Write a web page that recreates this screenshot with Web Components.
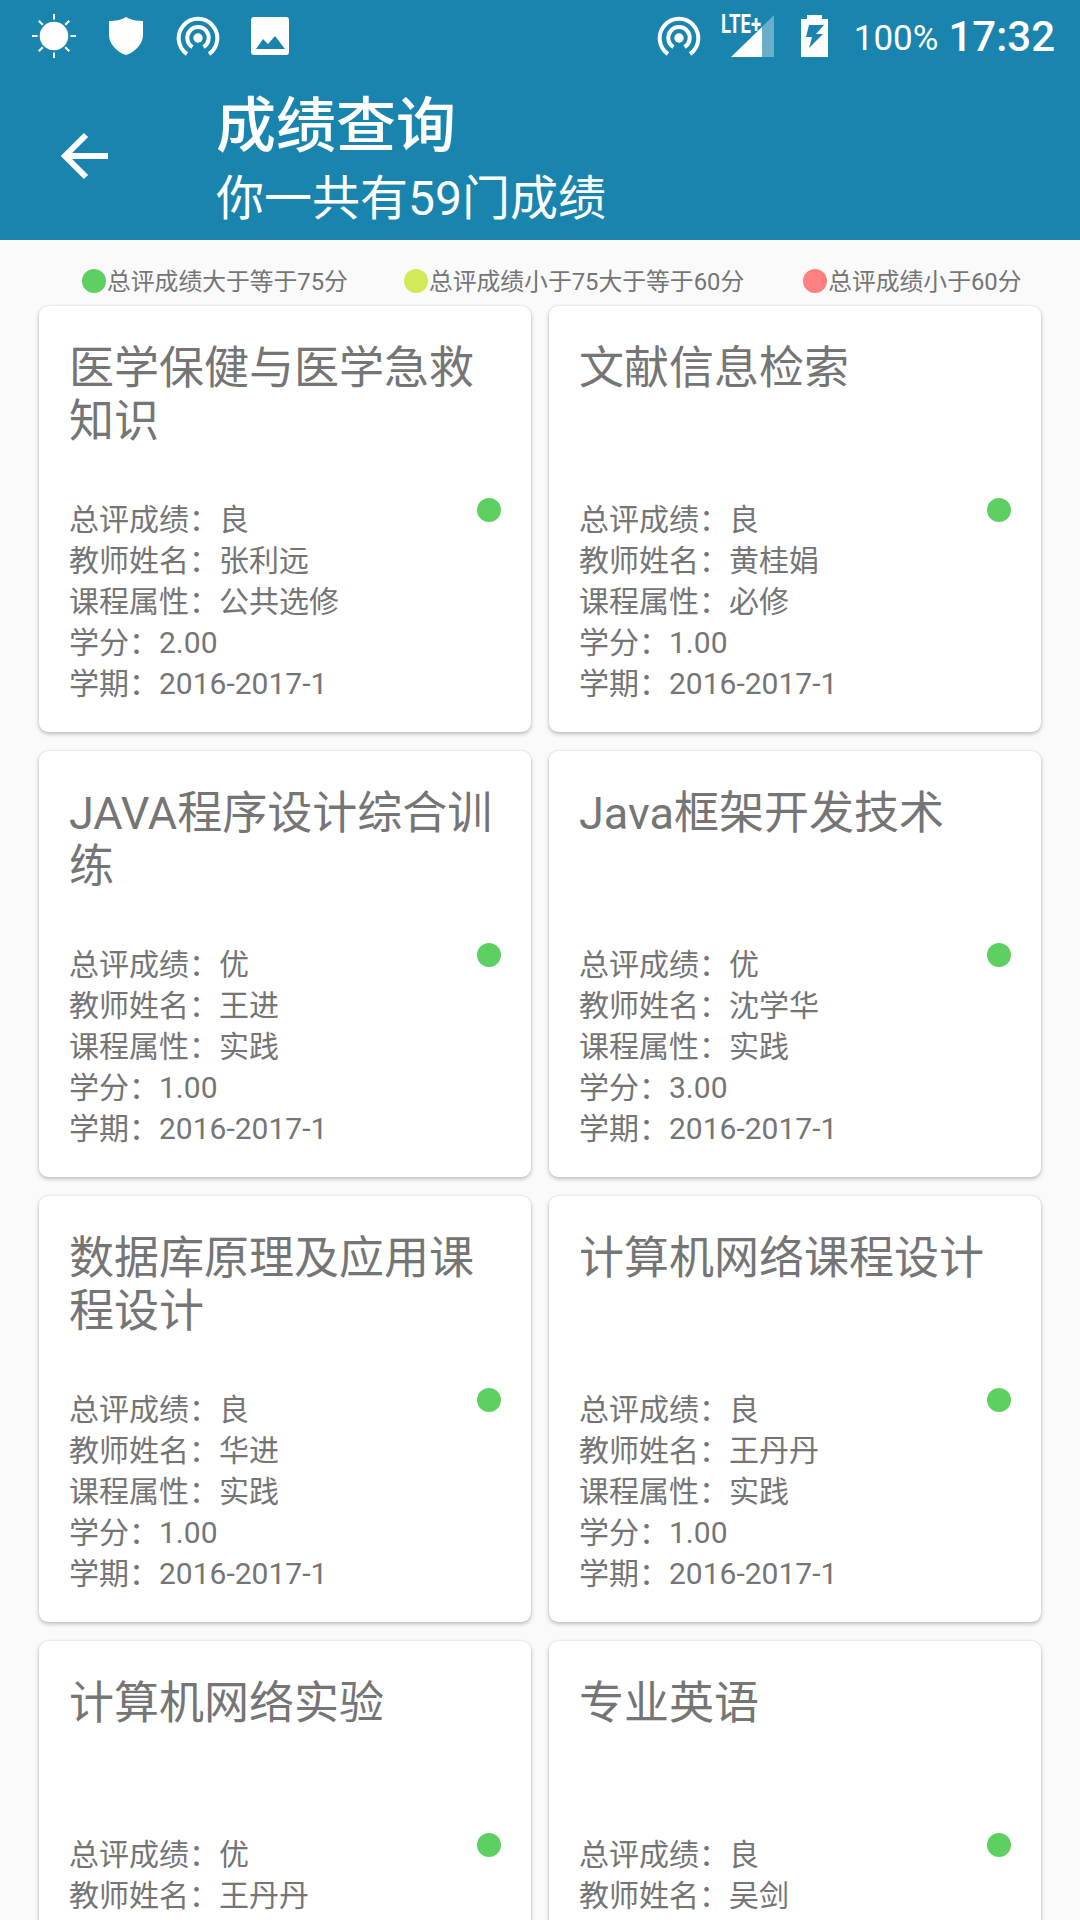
<!DOCTYPE html>
<html lang="zh">
<head>
<meta charset="utf-8">
<title>成绩查询</title>
<style>
    html, body {
        margin: 0;
        width: 1080px;
        height: 1920px;
        overflow: hidden;
        background: #fafafa;
        font-family: Roboto, "Noto Sans CJK SC", sans-serif;
    }
</style>
</head>
<body>
<app-screen>
    <status-bar slot="status"></status-bar>
    <app-bar slot="bar" heading="成绩查询" sub="你一共有59门成绩"></app-bar>
    <grade-legend slot="legend"></grade-legend>
    <grade-grid>
        <grade-card course="医学保健与医学急救知识" score="良" teacher="张利远" kind="公共选修" credit="2.00" term="2016-2017-1"></grade-card>
        <grade-card course="文献信息检索" score="良" teacher="黄桂娟" kind="必修" credit="1.00" term="2016-2017-1"></grade-card>
        <grade-card course="JAVA程序设计综合训练" score="优" teacher="王进" kind="实践" credit="1.00" term="2016-2017-1"></grade-card>
        <grade-card course="Java框架开发技术" score="优" teacher="沈学华" kind="实践" credit="3.00" term="2016-2017-1"></grade-card>
        <grade-card course="数据库原理及应用课程设计" score="良" teacher="华进" kind="实践" credit="1.00" term="2016-2017-1"></grade-card>
        <grade-card course="计算机网络课程设计" score="良" teacher="王丹丹" kind="实践" credit="1.00" term="2016-2017-1"></grade-card>
        <grade-card course="计算机网络实验" score="优" teacher="王丹丹"></grade-card>
        <grade-card course="专业英语" score="良" teacher="吴剑"></grade-card>
    </grade-grid>
</app-screen>

<script>
// Hotspot icon is used twice in the status bar
const hotspotIcon = `
<svg width="44" height="44" viewBox="0 0 44 44" fill="none" stroke="#fff" stroke-width="4">
    <circle cx="22" cy="24" r="4.700" fill="#fff" stroke="none"/>
    <path d="M16.500 33A10.700 10.700 0 1 1 27.500 33"/>
    <path d="M11 40A19.300 19.300 0 1 1 33 40"/>
</svg>`;

class AppScreen extends HTMLElement {
    constructor(){
        super();
        this.attachShadow({mode: 'open'});
        this.shadowRoot.innerHTML = `
<style>
    :host {
        display: block;
        width: 1080px;
        height: 1920px;
        overflow: hidden;
    }
    header {
        background: #1985ae;
        height: 240px;
    }
</style>
<header>
    <slot name="status"></slot>
    <slot name="bar"></slot>
</header>
<slot name="legend"></slot>
<slot></slot>`;
    }
}

class StatusBar extends HTMLElement {
    constructor(){
        super();
        this.attachShadow({mode: 'open'});
        this.shadowRoot.innerHTML = `
<style>
    :host {
        display: flex;
        align-items: center;
        height: 72px;
        padding: 0 25px 0 32px;
        color: #fff;
        box-sizing: border-box;
    }
    svg { display: block; flex: none; }
    .left, .right { display: flex; align-items: center; }
    .left { gap: 33px; }
    .right { margin-left: auto; }
    .pct { font-size: 35px; margin-left: 26px; padding-top: 4px; }
    .time { font-size: 42px; font-weight: 500; margin-left: 10px; }
</style>
<div class="left">
    <svg width="44" height="44" viewBox="0 0 44 44" fill="#fff">
        <circle cx="22" cy="22" r="14.300"/>
        <path d="M21 0h2v5.500h-2zM21 38.500h2V44h-2zM0 21h5.500v2H0zM38.500 21H44v2h-5.500zM6 7.500 7.500 6l4 4L10 11.500zM32.500 10l4-4L38 7.500l-4 4zM10 32.500l1.500 1.500-4 4L6 36.500zM34 32.500l4 4-1.500 1.500-4-4z"/>
    </svg>
    <svg width="34" height="38" viewBox="0 0 34 38" fill="#fff" style="margin-top:-1px">
        <path d="M17 0c5 3 11 4 17 4v14c0 9-8 17-17 20C8 35 0 27 0 18V4c6 0 12-1 17-4z"/>
    </svg>
    ${hotspotIcon}
    <svg width="38" height="38" viewBox="0 0 38 38" style="margin-left:-2px">
        <rect width="38" height="38" rx="3" fill="#fff"/>
        <path d="M5 32l7-10 5 5 7-8 10 13z" fill="#1985ae"/>
    </svg>
</div>
<div class="right">
    ${hotspotIcon}
    <svg width="54" height="60" viewBox="0 -8 54 60" style="margin-left:20px">
        <text x="0" y="19" font-family="Roboto" font-weight="700" font-size="25" fill="#fff" textLength="40" lengthAdjust="spacingAndGlyphs">LTE+</text>
        <path d="M10 43 41 13v30z" fill="#fff"/>
        <path d="M41 13 53 1v42H41z" fill="#fff" opacity=".35"/>
    </svg>
    <svg width="27" height="42" viewBox="0 0 27 42" style="margin-left:26px">
        <path d="M6 0h15v4h6v38H0V4h6z" fill="#fff"/>
        <path d="M8 10h15l-8 9h7L8 33l3-11H5z" fill="#1985ae"/>
    </svg>
    <span class="pct">100%</span>
    <span class="time">17:32</span>
</div>`;
    }
}

class AppBar extends HTMLElement {
    constructor(){
        super();
        this.attachShadow({mode: 'open'});
        this.shadowRoot.innerHTML = `
<style>
    :host {
        display: flex;
        align-items: flex-start;
        height: 168px;
        color: #fff;
    }
    svg { flex: none; margin: 60px 108px 0 60px; display: block; }
    h1 { margin: 19px 0 0; font-size: 60px; line-height: 72px; font-weight: 500; }
    p { margin: 8px 0 0; font-size: 48px; line-height: 56px; }
</style>
<svg width="48" height="48" viewBox="0 0 48 48" fill="none" stroke="#fff" stroke-width="6">
    <path d="M48 24H5M26 3 5 24l21 21"/>
</svg>
<div>
    <h1></h1>
    <p></p>
</div>`;
        this.shadowRoot.querySelector('h1').textContent = this.getAttribute('heading');
        this.shadowRoot.querySelector('p').textContent = this.getAttribute('sub');
    }
}

class GradeLegend extends HTMLElement {
    constructor(){
        super();
        this.attachShadow({mode: 'open'});
        this.shadowRoot.innerHTML = `
<style>
    :host {
        display: flex;
        gap: 56px;
        height: 66px;
        padding: 28px 0 0 82px;
        box-sizing: border-box;
        font-size: 23.800px;
        line-height: 28px;
        color: #757575;
    }
    div { display: flex; align-items: center; gap: 1px; height: 28px; white-space: nowrap; }
    div:last-child { margin-left: 3px; }
    i { width: 24px; height: 24px; border-radius: 50%; margin-bottom: 2px; }
</style>
<div><i style="background:#5ecf61"></i>总评成绩大于等于75分</div>
<div><i style="background:#d3ea58"></i>总评成绩小于75大于等于60分</div>
<div><i style="background:#ff8080"></i>总评成绩小于60分</div>`;
    }
}

class GradeGrid extends HTMLElement {
    constructor(){
        super();
        this.attachShadow({mode: 'open'});
        this.shadowRoot.innerHTML = `
<style>
    :host {
        display: grid;
        grid-template-columns: 492px 492px;
        column-gap: 18px;
        row-gap: 19px;
        padding-left: 39px;
    }
</style>
<slot></slot>`;
    }
}

class GradeCard extends HTMLElement {
    constructor(){
        super();
        this.attachShadow({mode: 'open'});
        this.shadowRoot.innerHTML = `
<style>
    :host {
        display: block;
        box-sizing: border-box;
        height: 426px;
        padding: 36px 30px 0 30px;
        background: #fff;
        border-radius: 9px;
        box-shadow: 0 2px 4px rgba(0,0,0,.24), 0 0 2px rgba(0,0,0,.12);
        color: #757575;
    }
    h2 {
        margin: 0 0 51px;
        height: 106px;
        font-size: 45px;
        line-height: 53px;
        font-weight: 400;
    }
    .row { display: flex; justify-content: space-between; align-items: flex-start; }
    .info { font-size: 30px; line-height: 41px; }
    .info div { white-space: nowrap; }
    i {
        width: 24px;
        height: 24px;
        margin-top: -1px;
        border-radius: 50%;
        background: #5ecf61;
    }
</style>
<h2></h2>
<div class="row">
    <div class="info"></div>
    <i></i>
</div>`;
        this.shadowRoot.querySelector('h2').textContent = this.getAttribute('course');

        // The lowest rows of the last cards lie below the fold, so only given fields get a line
        const fields = [
            ['总评成绩', 'score'],
            ['教师姓名', 'teacher'],
            ['课程属性', 'kind'],
            ['学分', 'credit'],
            ['学期', 'term']
        ];
        const info = this.shadowRoot.querySelector('.info');
        fields.forEach(([label, attr]) => {
            if(this.hasAttribute(attr)){
                const line = document.createElement('div');
                const value = document.createElement('span');
                value.textContent = this.getAttribute(attr);
                line.append(`${label}：`, value);
                info.append(line);
            }
        });
    }
}

window.customElements.define('app-screen', AppScreen);
window.customElements.define('status-bar', StatusBar);
window.customElements.define('app-bar', AppBar);
window.customElements.define('grade-legend', GradeLegend);
window.customElements.define('grade-grid', GradeGrid);
window.customElements.define('grade-card', GradeCard);
</script>
</body>
</html>
